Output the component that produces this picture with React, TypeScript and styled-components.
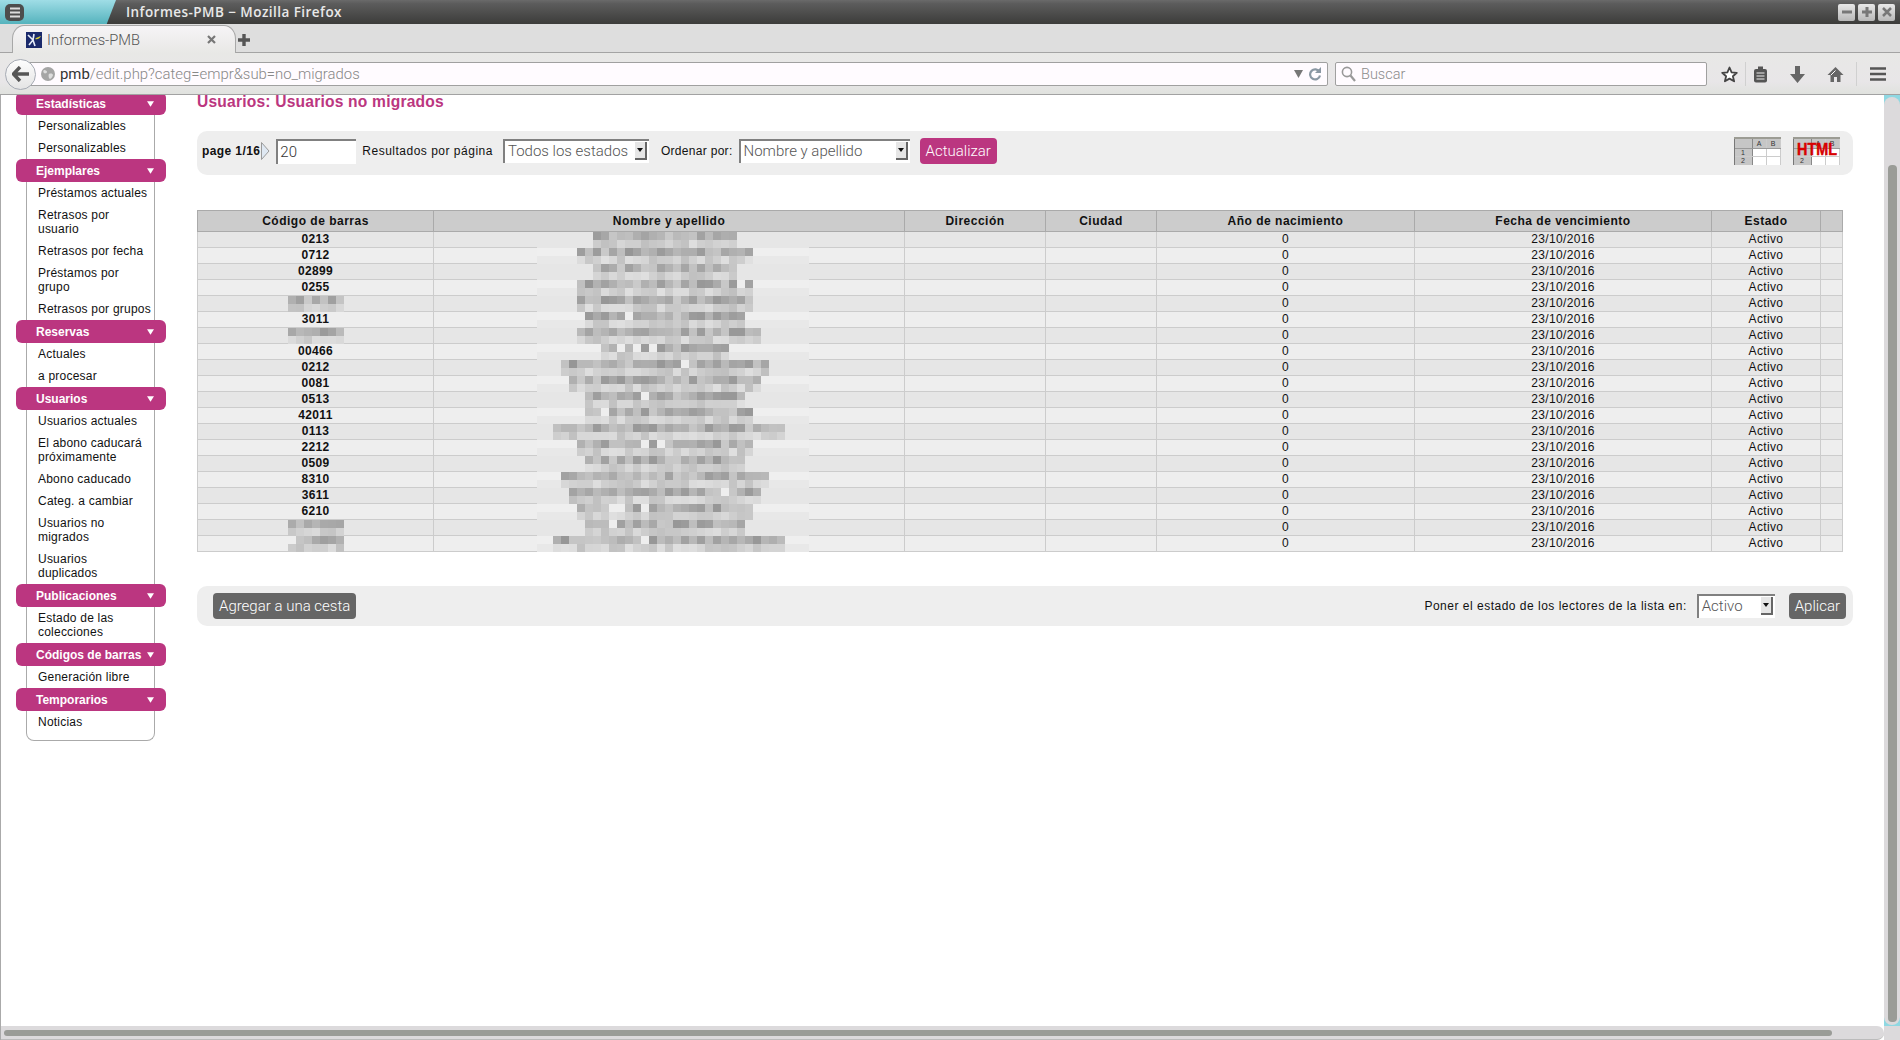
import styled, { createGlobalStyle } from 'styled-components';

const MAGENTA = '#bb3680';
const UI_FONT = '"Roboto", "Liberation Sans", sans-serif';
const PAGE_FONT = '"Liberation Sans", Arial, sans-serif';

const GlobalStyle = createGlobalStyle`
  html, body {
    margin: 0;
    padding: 0;
    background: #fff;
    overflow: hidden;
  }
`;

const menu = [
  { title: 'Estadísticas', items: ['Personalizables', 'Personalizables'] },
  {
    title: 'Ejemplares',
    items: [
      'Préstamos actuales',
      'Retrasos por\nusuario',
      'Retrasos por fecha',
      'Préstamos por\ngrupo',
      'Retrasos por grupos',
    ],
  },
  { title: 'Reservas', items: ['Actuales', 'a procesar'] },
  {
    title: 'Usuarios',
    items: [
      'Usuarios actuales',
      'El abono caducará\npróximamente',
      'Abono caducado',
      'Categ. a cambiar',
      'Usuarios no\nmigrados',
      'Usuarios\nduplicados',
    ],
  },
  { title: 'Publicaciones', peek: 'periódicas', items: ['Estado de las\ncolecciones'] },
  { title: 'Códigos de barras', items: ['Generación libre'] },
  { title: 'Temporarios', items: ['Noticias'] },
];

// barcode (null = pixelated in the screenshot) and the mosaic extent of the name, in 8px cells
const rows: { code: string | null; from: number; to: number }[] = [
  { code: '0213', from: 7, to: 25 },
  { code: '0712', from: 5, to: 27 },
  { code: '02899', from: 7, to: 25 },
  { code: '0255', from: 5, to: 27 },
  { code: null, from: 5, to: 27 },
  { code: '3011', from: 6, to: 26 },
  { code: null, from: 5, to: 28 },
  { code: '00466', from: 8, to: 24 },
  { code: '0212', from: 3, to: 29 },
  { code: '0081', from: 4, to: 28 },
  { code: '0513', from: 6, to: 26 },
  { code: '42011', from: 6, to: 27 },
  { code: '0113', from: 2, to: 31 },
  { code: '2212', from: 5, to: 27 },
  { code: '0509', from: 6, to: 26 },
  { code: '8310', from: 3, to: 29 },
  { code: '3611', from: 4, to: 28 },
  { code: '6210', from: 5, to: 27 },
  { code: null, from: 6, to: 26 },
  { code: null, from: 2, to: 31 },
];

const columns = [236, 471, 141, 111, 258, 297, 109, 22];

function noise(a: number, b: number) {
  const v = Math.sin(a * 12.9898 + b * 78.233) * 43758.5453;
  return v - Math.floor(v);
}

function grey(v: number) {
  const c = Math.round(v);
  return `rgb(${c},${c},${c})`;
}

function Mosaic({ row, seed, cells, from, to }: { row: number; seed: number; cells: number; from: number; to: number }) {
  const odd = row % 2 === 1;
  const blocks = [];
  for (let i = 0; i < cells; i++) {
    const inside = i >= from && i < to;
    const gap = noise(seed, i * 3) > 0.95;
    let top = odd ? 239 : 230;
    let bottom = odd ? 232 : 230;
    if (inside) {
      top = gap ? 238 : 150 + noise(seed, i) * 52;
      bottom = 192 + noise(seed + 40, i) * 32;
    }
    blocks.push(<rect key={`t${i}`} x={i * 8} y={0} width={8} height={8} fill={grey(top)} />);
    blocks.push(<rect key={`b${i}`} x={i * 8} y={8} width={8} height={8} fill={grey(bottom)} />);
  }
  return (
    <MosaicSvg width={cells * 8} height={16} viewBox={`0 0 ${cells * 8} 16`} shapeRendering="crispEdges">
      {blocks}
    </MosaicSvg>
  );
}

function SheetIcon({ html }: { html?: boolean }) {
  return (
    <svg width="47" height="28" viewBox="0 0 47 28" shapeRendering="crispEdges">
      <rect x="0" y="0" width="47" height="2" fill="#9c9c94" />
      <rect x="0" y="2" width="18" height="26" fill="#c6c6c6" />
      <rect x="18" y="2" width="29" height="10" fill="#c6c6c6" />
      <rect x="18" y="12" width="29" height="16" fill="#fff" />
      <rect x="0" y="2" width="1" height="26" fill="#777" />
      <rect x="18" y="2" width="1" height="26" fill="#888" />
      <rect x="32" y="2" width="1" height="26" fill="#ccc" />
      <rect x="46" y="2" width="1" height="26" fill="#ccc" />
      <rect x="1" y="11" width="46" height="1" fill="#999" />
      <rect x="1" y="19" width="46" height="1" fill="#ccc" />
      <SheetLabel x="25" y="9">A</SheetLabel>
      <SheetLabel x="39" y="9">B</SheetLabel>
      {!html && <SheetLabel x="9" y="18">1</SheetLabel>}
      <SheetLabel x="9" y="26">2</SheetLabel>
      {html && <HtmlLabel x="4" y="18" textLength="40" lengthAdjust="spacingAndGlyphs">HTML</HtmlLabel>}
    </svg>
  );
}

function Favicon() {
  return (
    <svg width="16" height="16" viewBox="0 0 16 16">
      <rect width="16" height="16" fill="#1b2a6b" />
      <path d="M7 8 2 3M7 8 3 13M7 8l1-6M7 8l2 6" stroke="#e8eefa" strokeWidth="1.6" />
      <path d="M9 7c2-2 4-2 6-3-1 2-3 4-6 3Z" fill="#d8d23a" />
    </svg>
  );
}

function DropArrow() {
  return <Tri viewBox="0 0 9 7"><path d="M0 0h9L4.5 7Z" fill="#fff" /></Tri>;
}

export default function App() {
  return (
    <Window>
      <GlobalStyle />
      <TitleBar>
        <FirefoxTab>
          <AppMenu>
            <svg width="12" height="11" viewBox="0 0 12 11">
              <path d="M1 1.5h10M1 5.5h10M1 9.5h10" stroke="#ddd" strokeWidth="2" />
            </svg>
          </AppMenu>
        </FirefoxTab>
        <WindowTitle>Informes-PMB − Mozilla Firefox</WindowTitle>
        <WindowButtons>
          <WindowButton>
            <svg width="10" height="10" viewBox="0 0 10 10"><path d="M0 5h10" stroke="#777" strokeWidth="3" /></svg>
          </WindowButton>
          <WindowButton>
            <svg width="10" height="10" viewBox="0 0 10 10"><path d="M0 5h10M5 0v10" stroke="#777" strokeWidth="3" /></svg>
          </WindowButton>
          <WindowButton>
            <svg width="10" height="10" viewBox="0 0 10 10"><path d="M1 1l8 8M9 1l-8 8" stroke="#777" strokeWidth="2.5" /></svg>
          </WindowButton>
        </WindowButtons>
      </TitleBar>

      <TabStrip>
        <Tab>
          <Favicon />
          <TabLabel>Informes-PMB</TabLabel>
          <svg width="9" height="9" viewBox="0 0 9 9"><path d="M1 1l7 7M8 1 1 8" stroke="#777" strokeWidth="2.2" /></svg>
        </Tab>
        <NewTab>
          <svg width="12" height="12" viewBox="0 0 12 12"><path d="M0 6h12M6 0v12" stroke="#555" strokeWidth="3.4" /></svg>
        </NewTab>
      </TabStrip>

      <NavBar>
        <BackButton>
          <svg width="18" height="16" viewBox="0 0 18 16">
            <path d="M8 1 1.500 8 8 15M2 8h15" stroke="#555" strokeWidth="3.4" fill="none" />
          </svg>
        </BackButton>
        <UrlBar>
          <svg width="14" height="14" viewBox="0 0 14 14">
            <circle cx="7" cy="7" r="7" fill="#a5a5a5" />
            <path d="M3 3c2 0 3 1 3 2S4 7 3 6 2 4 3 3ZM8 7c2-1 4 0 4 1s-2 4-3 4-2-4-1-5Z" fill="#ddd" />
          </svg>
          <UrlText>
            <UrlHost>pmb</UrlHost>/edit.php?categ=empr&amp;sub=no_migrados
          </UrlText>
          <svg width="9" height="8" viewBox="0 0 9 8"><path d="M0 0h9L4.500 8Z" fill="#777" /></svg>
          <svg width="14" height="14" viewBox="0 0 14 14">
            <path d="M11.500 5A5 5 0 1 0 12 8.500" stroke="#8a97a3" strokeWidth="2.2" fill="none" />
            <path d="M13 0v6H7Z" fill="#8a97a3" />
          </svg>
        </UrlBar>
        <SearchBar>
          <svg width="15" height="16" viewBox="0 0 15 16">
            <circle cx="6" cy="6" r="4.600" stroke="#999" strokeWidth="1.6" fill="none" />
            <path d="M9.500 9.500 14 15" stroke="#999" strokeWidth="2.2" />
          </svg>
          <SearchHint>Buscar</SearchHint>
        </SearchBar>
        <ToolIcons>
          <ToolIcon $width={32}>
            <svg width="17" height="17" viewBox="0 0 17 17">
              <path d="M8.500 1.500 10.600 6.300l5.200.5-3.900 3.400 1.200 5.100-4.600-2.700-4.600 2.700 1.200-5.100L1.200 6.800l5.200-.5Z" fill="#fff" stroke="#444" strokeWidth="1.8" strokeLinejoin="round" />
            </svg>
          </ToolIcon>
          <ToolSeparator />
          <ToolIcon $width={29}>
            <svg width="15" height="17" viewBox="0 0 15 17">
              <rect x="1" y="3" width="13" height="13.500" rx="2" fill="#555" />
              <rect x="5" y="0.500" width="5" height="3" fill="#555" />
              <path d="M3.500 7h8M3.500 10h8M3.500 13h8" stroke="#eee" strokeWidth="1" />
            </svg>
          </ToolIcon>
          <ToolIcon $width={44}>
            <svg width="15" height="17" viewBox="0 0 15 17"><path d="M5 0h5v8h5l-7.500 9L0 8h5Z" fill="#666" /></svg>
          </ToolIcon>
          <ToolIcon $width={32}>
            <svg width="17" height="17" viewBox="0 0 17 17">
              <path d="M8.500 1 0.500 9h3v7h3.500v-5h3v5H13.500V9h3Z" fill="#666" />
              <path d="M8.500 4.500 4 9" stroke="#fff" strokeWidth="1" />
            </svg>
          </ToolIcon>
          <ToolSeparator $left={5} />
          <ToolIcon $width={42}>
            <svg width="16" height="16" viewBox="0 0 16 16">
              <path d="M0 2.500h16M0 8h16M0 13.500h16" stroke="#555" strokeWidth="2.600" />
            </svg>
          </ToolIcon>
        </ToolIcons>
      </NavBar>

      <Body>
        <ViewColumn>
          <Content>
            <Sidebar>
              {menu.map((section) => (
                <div key={section.title}>
                  <SectionHeader>
                    {section.title}
                    <DropArrow />
                    {section.peek && <HeaderPeek>{section.peek}</HeaderPeek>}
                  </SectionHeader>
                  <SectionItems>
                    {section.items.map((item, i) => (
                      <MenuItem key={i}>{item}</MenuItem>
                    ))}
                  </SectionItems>
                </div>
              ))}
              <MenuEnd />
            </Sidebar>

            <Page>
              <PageTitle>Usuarios: Usuarios no migrados</PageTitle>
              <FilterBar>
                <PageCount>page 1/16</PageCount>
                <NextArrow viewBox="0 0 9 18">
                  <path d="M0.500 0.500 8 9 0.500 17.500Z" fill="#dfe8f2" stroke="#9a9a9a" />
                </NextArrow>
                <PerPage>20</PerPage>
                <BarLabel $left={6}>Resultados por página</BarLabel>
                <Select $width={146} $left={10}>
                  Todos los estados
                  <SelectArrow />
                </Select>
                <BarLabel $left={12} $spacing={0.3}>Ordenar por:</BarLabel>
                <Select $width={171} $left={6}>
                  Nombre y apellido
                  <SelectArrow />
                </Select>
                <PrimaryButton>Actualizar</PrimaryButton>
                <ExportIcons>
                  <SheetIcon />
                  <SheetIcon html />
                </ExportIcons>
              </FilterBar>

              <Table>
                <colgroup>
                  {columns.map((w, i) => (
                    <col key={i} width={w} />
                  ))}
                </colgroup>
                <thead>
                  <tr>
                    <Th>Código de barras</Th>
                    <Th>Nombre y apellido</Th>
                    <Th>Dirección</Th>
                    <Th>Ciudad</Th>
                    <Th>Año de nacimiento</Th>
                    <Th>Fecha de vencimiento</Th>
                    <Th>Estado</Th>
                    <Th />
                  </tr>
                </thead>
                <tbody>
                  {rows.map((row, i) => (
                    <Row key={i} $odd={i % 2 === 0}>
                      <CodeCell>
                        {row.code ?? <Mosaic row={i} seed={i + 100} cells={7} from={0} to={7} />}
                      </CodeCell>
                      <NameCell>
                        <Mosaic row={i} seed={i} cells={34} from={row.from} to={row.to} />
                      </NameCell>
                      <Td />
                      <Td />
                      <Td>0</Td>
                      <Td>23/10/2016</Td>
                      <Td>Activo</Td>
                      <Td />
                    </Row>
                  ))}
                </tbody>
              </Table>

              <ActionBar>
                <DarkButton>Agregar a una cesta</DarkButton>
                <ActionRight>
                  <BarLabel>Poner el estado de los lectores de la lista en:</BarLabel>
                  <Select $width={78} $left={10}>
                    Activo
                    <SelectArrow />
                  </Select>
                  <DarkButton $left={14}>Aplicar</DarkButton>
                </ActionRight>
              </ActionBar>
            </Page>
          </Content>
          <HScroll>
            <HThumb />
          </HScroll>
        </ViewColumn>
        <VColumn>
          <VScroll>
            <VThumb />
          </VScroll>
          <ScrollCorner />
        </VColumn>
      </Body>
    </Window>
  );
}

const Window = styled.div`
  width: 1900px;
  height: 1040px;
  display: flex;
  flex-direction: column;
  overflow: hidden;
  background: #fff;
  font-family: ${PAGE_FONT};
`;

const TitleBar = styled.div`
  height: 24px;
  display: flex;
  align-items: center;
  background: linear-gradient(#6a6a6a, #5c5c5c 15%, #3c3c3a);
  flex-shrink: 0;
`;

const FirefoxTab = styled.div`
  width: 116px;
  height: 24px;
  display: flex;
  align-items: center;
  padding-left: 5px;
  box-sizing: border-box;
  background: linear-gradient(#9fdde6, #55b3bd);
  clip-path: polygon(0 0, 100% 0, 92% 100%, 0 100%);
`;

const AppMenu = styled.div`
  width: 19px;
  height: 17px;
  border-radius: 5px;
  background: #4d4d4d;
  display: flex;
  align-items: center;
  justify-content: center;
`;

const WindowTitle = styled.div`
  margin-left: 10px;
  font-family: "Open Sans", sans-serif;
  font-size: 13.5px;
  font-weight: 600;
  letter-spacing: 0.45px;
  color: #e8e8e8;
`;

const WindowButtons = styled.div`
  margin-left: auto;
  display: flex;
  gap: 3px;
  padding-right: 5px;
`;

const WindowButton = styled.div`
  width: 17px;
  height: 17px;
  border-radius: 2px;
  background: linear-gradient(#e8e8e8, #b8b8b8);
  display: flex;
  align-items: center;
  justify-content: center;
`;

const TabStrip = styled.div`
  height: 29px;
  flex-shrink: 0;
  box-sizing: border-box;
  background: #dedede;
  border-bottom: 1px solid #a4a4a4;
  display: flex;
  align-items: flex-end;
  padding-left: 12px;
`;

const Tab = styled.div`
  width: 224px;
  height: 28px;
  margin-bottom: -1px;
  box-sizing: border-box;
  padding: 0 19px 0 13px;
  display: flex;
  align-items: center;
  border: 1px solid #a8a8a8;
  border-bottom: none;
  border-radius: 12px 12px 0 0 / 14px 14px 0 0;
  background: linear-gradient(#f6f4f6, #e8e8e6);
`;

const TabLabel = styled.span`
  margin-left: 5px;
  flex: 1;
  font-family: ${UI_FONT};
  font-size: 14.7px;
  font-weight: 300;
  color: #555;
`;

const NewTab = styled.div`
  align-self: center;
  margin: 3px 0 0 2px;
  display: flex;
`;

const NavBar = styled.div`
  height: 42px;
  flex-shrink: 0;
  box-sizing: border-box;
  background: linear-gradient(#e8e8e6, #e8e6e8 70%, #e0e2de);
  border-bottom: 1px solid #a2a2a2;
  display: flex;
  align-items: center;
  padding-left: 5px;
  padding-top: 1px;
`;

const BackButton = styled.div`
  width: 31px;
  height: 31px;
  box-sizing: border-box;
  border-radius: 50%;
  border: 1px solid #a6abb4;
  background: linear-gradient(#fdfdfd, #e4e4e4);
  display: flex;
  align-items: center;
  justify-content: center;
  margin-right: -13px;
  position: relative;
  z-index: 1;
`;

const UrlBar = styled.div`
  width: 1305px;
  height: 24px;
  box-sizing: border-box;
  padding: 0 5px 0 17px;
  display: flex;
  align-items: center;
  gap: 5px;
  background: #fffbff;
  border: 1px solid #a0a0a0;
  border-radius: 0 2px 2px 0;
`;

const UrlText = styled.div`
  flex: 1;
  font-family: ${UI_FONT};
  font-size: 14.9px;
  font-weight: 300;
  color: #888;
`;

const UrlHost = styled.span`
  color: #333;
  font-weight: 400;
`;

const SearchBar = styled.div`
  width: 372px;
  height: 24px;
  margin-left: 7px;
  box-sizing: border-box;
  padding-left: 5px;
  display: flex;
  align-items: center;
  gap: 5px;
  background: #fffbff;
  border: 1px solid #a0a0a0;
  border-radius: 2px;
`;

const SearchHint = styled.span`
  font-family: ${UI_FONT};
  font-size: 14.5px;
  font-weight: 300;
  color: #8c8c8c;
`;

const ToolIcons = styled.div`
  display: flex;
  align-items: center;
  margin-left: 6px;
`;

const ToolIcon = styled.div<{ $width: number }>`
  width: ${(p) => p.$width}px;
  display: flex;
  justify-content: center;
`;

const ToolSeparator = styled.div<{ $left?: number }>`
  width: 1px;
  height: 24px;
  margin-left: ${(p) => p.$left ?? 0}px;
  background: #d0d0d0;
`;

const Body = styled.div`
  flex: 1;
  min-height: 0;
  display: flex;
  border-left: 1px solid #aaa;
`;

const ViewColumn = styled.div`
  flex: 1;
  min-width: 0;
  display: flex;
  flex-direction: column;
`;

const Content = styled.div`
  flex: 1;
  min-height: 0;
  display: flex;
  overflow: hidden;
`;

const Sidebar = styled.nav`
  width: 150px;
  margin-left: 15px;
  margin-top: -3px;
  flex-shrink: 0;
`;

const SectionHeader = styled.div`
  position: relative;
  height: 23px;
  box-sizing: border-box;
  padding: 0 12px 0 20px;
  display: flex;
  align-items: center;
  justify-content: space-between;
  background: ${MAGENTA};
  border-radius: 6px;
  color: #fff;
  font-size: 12px;
  font-weight: 700;
  letter-spacing: 0;
  white-space: nowrap;
`;

const HeaderPeek = styled.span`
  position: absolute;
  top: 100%;
  left: 26px;
  height: 2px;
  overflow: hidden;
  line-height: 14px;
  color: #333;
  font-weight: 400;
  z-index: 1;
`;

const Tri = styled.svg`
  width: 7px;
  height: 6px;
  flex-shrink: 0;
`;

const SectionItems = styled.div`
  margin: 0 11px 0 10px;
  border-left: 1px solid #aaa;
  border-right: 1px solid #aaa;
`;

const MenuItem = styled.div`
  padding: 4px 0 4px 11px;
  font-size: 12px;
  line-height: 14px;
  letter-spacing: 0.22px;
  color: #111;
  white-space: pre;
`;

const MenuEnd = styled.div`
  height: 8px;
  margin: 0 11px 0 10px;
  box-sizing: border-box;
  border: 1px solid #aaa;
  border-top: none;
  border-radius: 0 0 10px 10px;
`;

const Page = styled.main`
  flex: 1;
  min-width: 0;
  margin-left: 31px;
  margin-right: 31px;
`;

const PageTitle = styled.h1`
  margin: -2px 0 0;
  height: 38px;
  font-size: 15.6px;
  line-height: 17px;
  font-weight: 700;
  letter-spacing: 0.2px;
  color: ${MAGENTA};
`;

const Bar = styled.div`
  display: flex;
  align-items: center;
  background: #eee;
  border-radius: 10px;
  box-sizing: border-box;
`;

const FilterBar = styled(Bar)`
  height: 44px;
  padding: 0 13px 4px 5px;
`;

const PageCount = styled.b`
  font-size: 12px;
  letter-spacing: 0.4px;
  color: #111;
`;

const NextArrow = styled.svg`
  width: 9px;
  height: 18px;
  margin-left: 1px;
`;

const inputLook = `
  box-sizing: border-box;
  background: #fff;
  border-top: 2px solid #808080;
  border-left: 2px solid #808080;
  font-family: ${UI_FONT};
  font-size: 15px;
  font-weight: 300;
  color: #555;
`;

const PerPage = styled.div`
  ${inputLook}
  width: 80px;
  height: 25px;
  margin-left: 6px;
  padding: 2px 0 0 2px;
  color: #333;
`;

const BarLabel = styled.span<{ $left?: number; $spacing?: number }>`
  margin-left: ${(p) => p.$left ?? 0}px;
  font-size: 12px;
  letter-spacing: ${(p) => p.$spacing ?? 0.5}px;
  color: #111;
  white-space: nowrap;
`;

const Select = styled.div<{ $width: number; $left: number }>`
  ${inputLook}
  width: ${(p) => p.$width}px;
  margin-left: ${(p) => p.$left}px;
  height: 24px;
  padding: 0 2px 2px 3px;
  display: flex;
  align-items: center;
  justify-content: space-between;
  white-space: nowrap;
`;

const SelectArrow = styled.i`
  width: 12px;
  height: 18px;
  flex-shrink: 0;
  box-sizing: border-box;
  background: #e6e6e6;
  border-right: 2px solid #666;
  border-bottom: 2px solid #666;
  display: flex;
  align-items: center;
  justify-content: center;

  &::after {
    content: '';
    border-left: 3px solid transparent;
    border-right: 3px solid transparent;
    border-top: 4px solid #111;
  }
`;

const buttonLook = `
  height: 26px;
  box-sizing: border-box;
  padding: 0 6px;
  display: flex;
  align-items: center;
  border-radius: 4px;
  color: #fff;
  font-family: ${UI_FONT};
  font-size: 15px;
  font-weight: 300;
  white-space: nowrap;
`;

const PrimaryButton = styled.div`
  ${buttonLook}
  background: ${MAGENTA};
  margin-left: 10px;
`;

const DarkButton = styled.div<{ $left?: number }>`
  ${buttonLook}
  background: #666;
  margin-left: ${(p) => p.$left ?? 0}px;
`;

const ExportIcons = styled.div`
  margin-left: auto;
  display: flex;
  gap: 12px;
`;

const SheetLabel = styled.text`
  font-family: ${PAGE_FONT};
  font-size: 7px;
  fill: #333;
  text-anchor: middle;
`;

const HtmlLabel = styled.text`
  font-family: ${PAGE_FONT};
  font-size: 17px;
  font-weight: 700;
  fill: #d80000;
  stroke: #d80000;
  stroke-width: 0.5px;
`;

const Table = styled.table`
  margin-top: 35px;
  width: 1645px;
  table-layout: fixed;
  border-collapse: collapse;
  font-size: 12px;
  letter-spacing: 0.35px;
  color: #111;
`;

const Th = styled.th`
  height: 21px;
  padding: 0;
  box-sizing: border-box;
  background: #ccc;
  border: 1px solid #aaa;
  font-weight: 700;
  letter-spacing: 0.5px;
  text-align: center;
`;

const Row = styled.tr<{ $odd: boolean }>`
  background: ${(p) => (p.$odd ? '#e6e6e6' : '#eee')};
`;

const Td = styled.td`
  height: 16px;
  padding: 0 0 1px;
  box-sizing: border-box;
  border: 1px solid #ccc;
  text-align: center;
  line-height: 14px;
`;

const CodeCell = styled(Td)`
  position: relative;
  font-weight: 700;
`;

const NameCell = styled(Td)`
  position: relative;
`;

const MosaicSvg = styled.svg`
  position: absolute;
  top: 0;
  left: calc(50% - ${(p) => Number(p.width) / 2 - (Number(p.width) > 100 ? 4 : 0)}px);
  z-index: 1;
`;

const ActionBar = styled(Bar)`
  margin-top: 34px;
  height: 40px;
  padding: 0 7px 0 16px;
  justify-content: space-between;
`;

const ActionRight = styled.div`
  display: flex;
  align-items: center;
`;

const HScroll = styled.div`
  height: 14px;
  flex-shrink: 0;
  box-sizing: border-box;
  padding: 4px 52px 3px 3px;
  background: #dcdadc;
  border-radius: 0 10px 10px 0;
  border-bottom: 1px solid #bbb;
`;

const HThumb = styled.div`
  height: 100%;
  border-radius: 4px;
  background: #9a9c97;
`;

const VColumn = styled.div`
  width: 16px;
  flex-shrink: 0;
  display: flex;
  flex-direction: column;
  background: #8fd8e2;
  padding-top: 2px;
  box-sizing: border-box;
`;

const VScroll = styled.div`
  flex: 1;
  min-height: 0;
  margin-bottom: 1px;
  padding: 68px 3px 3px 4px;
  background: #dcdadc;
  border-radius: 8px;
`;

const VThumb = styled.div`
  height: 100%;
  border-radius: 4px;
  background: #9a9c97;
`;

const ScrollCorner = styled.div`
  height: 14px;
  flex-shrink: 0;
  background: #dcdadc;
`;
